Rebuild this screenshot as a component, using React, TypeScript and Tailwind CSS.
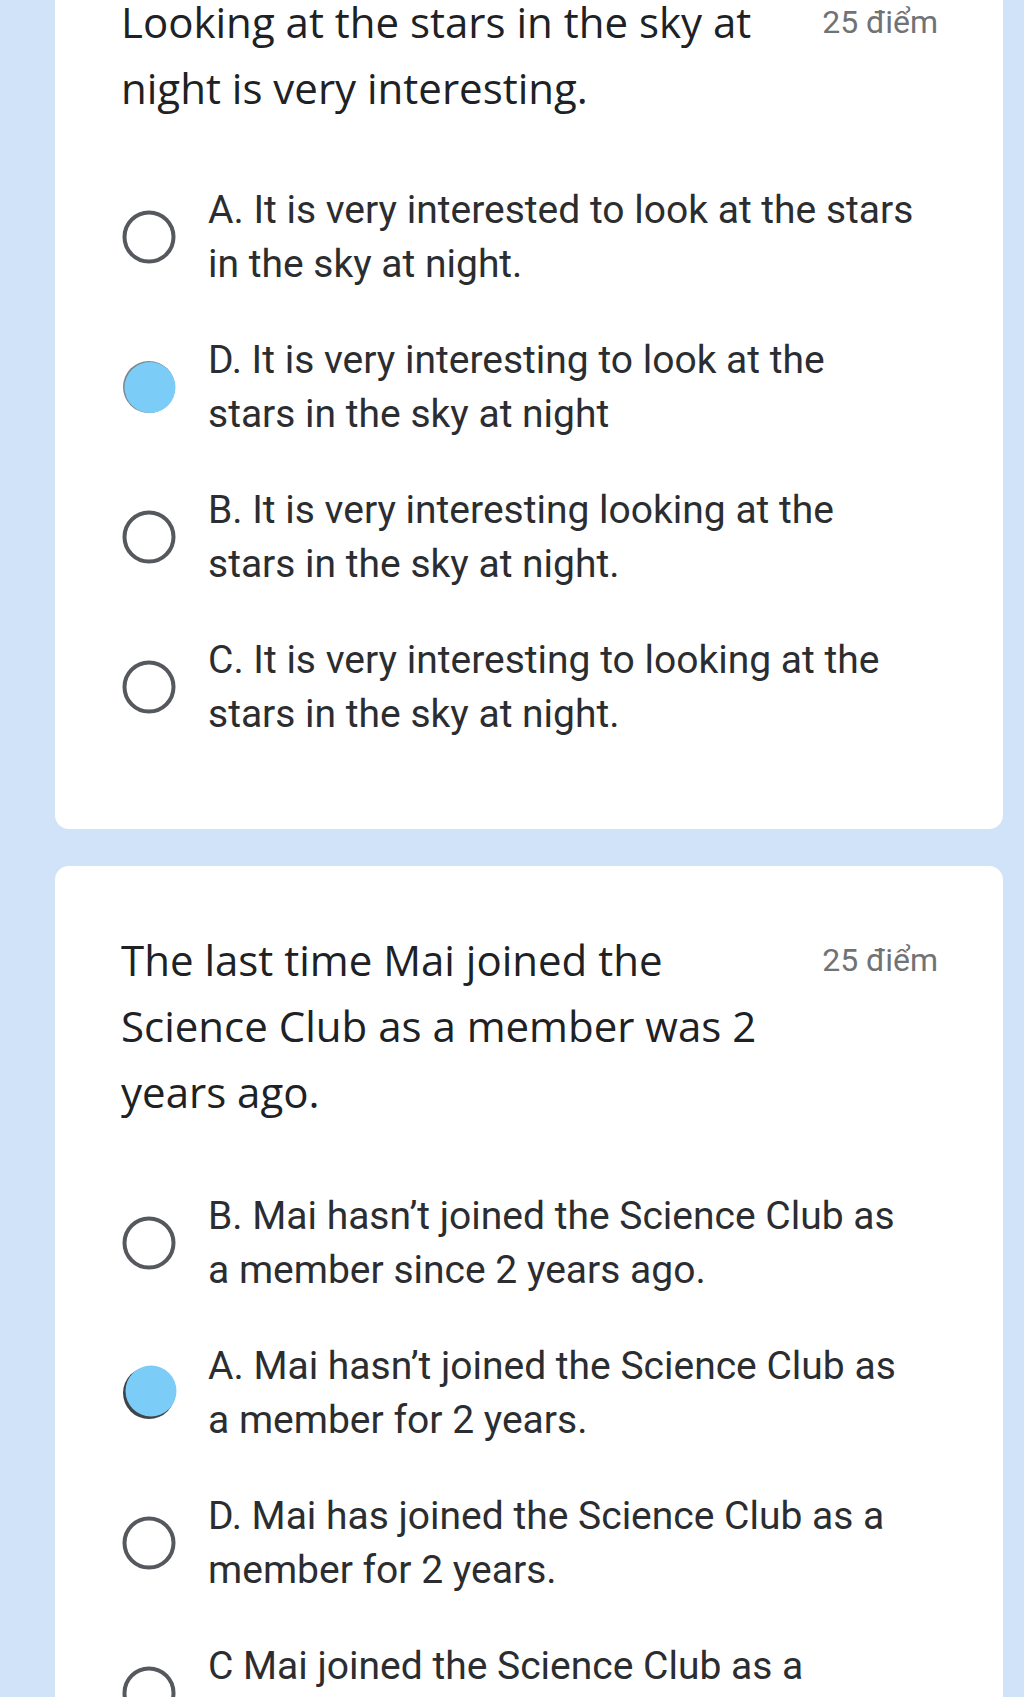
import React from "react";

type Opt = { lines: string[]; selected?: "d" | "a" };

function Radio({ selected }: { selected?: "d" | "a" }) {
  if (!selected) {
    return (
      <svg width="56" height="56" viewBox="0 0 56 56" className="block">
        <circle cx="28" cy="28" r="24.5" fill="none" stroke="#55585c" strokeWidth="4" />
      </svg>
    );
  }
  return (
    <svg width="56" height="56" viewBox="0 0 56 56" className="block">
      {selected === "d" ? (
        <>
          <circle cx="28" cy="28" r="26" fill="#7a858f" />
          <circle cx="29" cy="28.5" r="25.5" fill="#7bcdf8" />
        </>
      ) : (
        <>
          <circle cx="28" cy="28" r="26" fill="#3f4448" />
          <circle cx="30" cy="26" r="25.5" fill="#7bcdf8" />
        </>
      )}
    </svg>
  );
}

function Option({ lines, selected }: Opt) {
  return (
    <div className="flex items-center">
      <div className="w-[87px] shrink-0 flex items-center">
        <Radio selected={selected} />
      </div>
      <div
        className="text-[39px] leading-[54px] text-[#2b2d30] whitespace-nowrap"
        style={{ fontFamily: "Roboto, 'Liberation Sans', sans-serif" }}
      >
        {lines.map((l, i) => (
          <div key={i}>{l}</div>
        ))}
      </div>
    </div>
  );
}

function Card({
  title,
  options,
  className,
  gapClass,
}: {
  title: string[];
  options: Opt[];
  className: string;
  gapClass: string;
}) {
  return (
    <div className={"bg-white rounded-[14px] pl-[66px] pr-[66px] " + className}>
      <div className="flex items-start justify-between">
        <div
          className="text-[42px] leading-[66px] text-[#202124] whitespace-nowrap"
          style={{ fontFamily: "'Open Sans', 'Liberation Sans', sans-serif" }}
        >
          {title.map((l, i) => (
            <div key={i}>{l}</div>
          ))}
        </div>
        <div
          className="text-[32px] leading-[66px] text-[#6f7377] -mr-[1px] whitespace-nowrap"
          style={{ fontFamily: "Roboto, 'Liberation Sans', sans-serif" }}
        >
          25 điểm
        </div>
      </div>
      <div className={"flex flex-col gap-[42px] " + gapClass}>
        {options.map((o, i) => (
          <Option key={i} {...o} />
        ))}
      </div>
    </div>
  );
}

export default function App() {
  return (
    <div className="w-[1024px] h-[1697px] overflow-hidden bg-[#d1e3f8] pl-[55px] pr-[21px]">
      <Card
        className="-mt-[35px] pt-[24px] pb-[88px]"
        gapClass="mt-[62px]"
        title={["Looking at the stars in the sky at", "night is very interesting."]}
        options={[
          { lines: ["A. It is very interested to look at the stars", "in the sky at night."] },
          { lines: ["D. It is very interesting to look at the", "stars in the sky at night"], selected: "d" },
          { lines: ["B. It is very interesting looking at the", "stars in the sky at night."] },
          { lines: ["C. It is very interesting to looking at the", "stars in the sky at night."] },
        ]}
      />
      <Card
        className="mt-[37px] pt-[61px] pb-[88px]"
        gapClass="mt-[64px]"
        title={["The last time Mai joined the", "Science Club as a member was 2", "years ago."]}
        options={[
          { lines: ["B. Mai hasn\u2019t joined the Science Club as", "a member since 2 years ago."] },
          { lines: ["A. Mai hasn\u2019t joined the Science Club as", "a member for 2 years."], selected: "a" },
          { lines: ["D. Mai has joined the Science Club as a", "member for 2 years."] },
          { lines: ["C Mai joined the Science Club as a", "member 2 years ago."] },
        ]}
      />
    </div>
  );
}
